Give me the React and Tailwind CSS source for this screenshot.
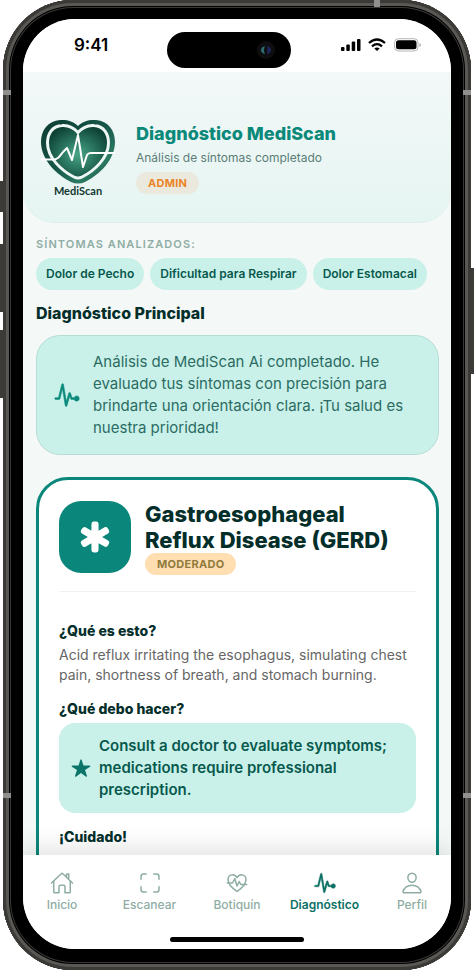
import React, { useState } from 'react';
import {
  IoFitnessOutline,
  IoHomeOutline,
  IoMedical,
  IoPersonOutline,
  IoPulse,
  IoScanOutline,
  IoStar,
} from 'react-icons/io5';

const symptoms = ['Dolor de Pecho', 'Dificultad para Respirar', 'Dolor Estomacal'];

const tabs = [
  { name: 'Inicio', icon: IoHomeOutline },
  { name: 'Escanear', icon: IoScanOutline },
  { name: 'Botiquín', icon: IoFitnessOutline },
  { name: 'Diagnóstico', icon: IoPulse },
  { name: 'Perfil', icon: IoPersonOutline },
];

const Logo = () => (
  <svg viewBox="0 0 76 80" className="h-20 w-[76px] shrink-0" role="img" aria-label="MediScan">
    <defs>
      <linearGradient id="rim" x1="0" y1="0" x2="1" y2="1">
        <stop offset="0" stopColor="#0d3b30" />
        <stop offset="0.5" stopColor="#17584a" />
        <stop offset="0.75" stopColor="#2c7a63" />
        <stop offset="1" stopColor="#0d3b30" />
      </linearGradient>
      <radialGradient id="core" cx="0.5" cy="0.55" r="0.55">
        <stop offset="0" stopColor="#4aa686" />
        <stop offset="0.5" stopColor="#2a7560" />
        <stop offset="1" stopColor="#0f4537" />
      </radialGradient>
    </defs>
    <path
      d="M38 8C33 3 27 1.500 20 2C8 3 1 12 1 24C1 42 17 57 31 64Q38 67 45 64C59 57 75 42 75 24C75 12 68 3 56 2C49 1.500 43 3 38 8Z"
      fill="url(#rim)"
    />
    <path
      d="M38 14.500C34 10 28 7 22 7.500C12 8 7.500 16 7.500 25C7.500 40 22 53 34 59Q38 61 42 59C54 53 68.500 40 68.500 25C68.500 16 64 8 54 7.500C48 7 42 10 38 14.500Z"
      fill="url(#core)"
      stroke="#eef7f4"
      strokeWidth="3"
    />
    <path d="M1 41.500H13C18 41.500 20 38 23 34L27 30L32 42L38 17L43 49L47 37Q48 35 51 35H75" fill="none" stroke="#fff" strokeWidth="2" strokeLinejoin="round" />
    <text x="38" y="77" textAnchor="middle" fontSize="11" fontWeight="700" fill="#12382f" fontFamily="Lato, sans-serif">
      MediScan
    </text>
  </svg>
);

const StatusBar = () => (
  <div className="flex h-[53px] shrink-0 items-start justify-between bg-white pr-[30px] pl-[51px]">
    <span className="mt-[14px] w-[43px] text-[17px] leading-6 font-semibold text-black">9:41</span>
    <div className="mt-[13px] flex h-9 w-[124px] items-center justify-end rounded-full bg-black pr-4">
      <svg viewBox="0 0 18 18" className="h-[18px] w-[18px]">
        <circle cx="9" cy="9" r="9" fill="#0e0e10" />
        <path d="M8 5Q4 6 4 9T8 13Q6 9 8 5Z" fill="#2a6c70" />
        <path d="M10 5Q14 6 14 9T10 13Q11 9 10 5Z" fill="#20265c" />
      </svg>
    </div>
    <svg viewBox="0 0 80 14" className="mt-[19px] h-[14px] w-20">
      <rect x="0" y="9" width="3.500" height="4" rx="1" />
      <rect x="5.300" y="6.500" width="3.500" height="6.500" rx="1" />
      <rect x="10.700" y="3.500" width="3.500" height="9.500" rx="1" />
      <rect x="16" y="1" width="3.500" height="12" rx="1" />
      <path d="M28 5Q36 -2 44 5M31 8.300Q36 4 41 8.300" fill="none" stroke="#000" strokeWidth="2.300" />
      <path d="M33.300 10.500Q36 8.300 38.700 10.500L36 13Z" />
      <rect x="53.500" y="0.700" width="23.500" height="12.300" rx="4" fill="none" stroke="#b5b5b5" />
      <rect x="55" y="2.300" width="20.500" height="9" rx="2.500" />
      <path d="M78.300 5V9Q80 8.500 80 7T78.300 5Z" fill="#b5b5b5" />
    </svg>
  </div>
);

const Header = () => (
  <header className="flex items-center gap-5 rounded-b-[32px] border-b border-[#d9edea] bg-linear-to-b from-[#f3f8f8] to-[#e5f5f2] pt-[46px] pr-4 pb-6 pl-[17px]">
    <Logo />
    <div className="flex flex-col items-start">
      <h1 className="text-[18px] leading-6 font-extrabold text-[#0a897a]">Diagnóstico MediScan</h1>
      <p className="mt-1 text-[12px] leading-4 text-[#5c7d77]">Análisis de síntomas completado</p>
      <span className="mt-[6px] rounded-full bg-[#ebe9de] px-3 text-[11px] leading-[22px] font-bold tracking-wide text-[#ec8426]">
        ADMIN
      </span>
    </div>
  </header>
);

const DiagnosisCard = () => (
  <article className="mt-[22px] rounded-[32px] border-3 border-[#0a877a] bg-white px-5 pt-[21px] pb-24">
    <div className="flex gap-[14px] border-b border-[#edf2f2] pb-4">
      <div className="flex size-[72px] shrink-0 items-center justify-center rounded-[22px] bg-[#0a877a] text-white">
        <IoMedical className="size-[38px]" />
      </div>
      <div className="flex flex-col items-start">
        <h3 className="text-[22px] leading-[26px] font-extrabold text-[#032e2a]">Gastroesophageal Reflux Disease (GERD)</h3>
        <span className="rounded-full bg-[#ffdfb2] px-3 text-[11px] leading-[22px] font-bold tracking-wide text-[#917b3c]">
          MODERADO
        </span>
      </div>
    </div>
    <h4 className="mt-[29px] text-[14px] leading-5 font-extrabold text-[#032e2a]">¿Qué es esto?</h4>
    <p className="mt-1 text-[14px] leading-5 text-[#666]">
      Acid reflux irritating the esophagus, simulating chest pain, shortness of breath, and stomach burning.
    </p>
    <h4 className="mt-[14px] text-[14px] leading-5 font-extrabold text-[#032e2a]">¿Qué debo hacer?</h4>
    <div className="mt-1 flex items-center gap-2 rounded-2xl bg-[#caf1e9] px-3 py-3 text-[#07594e]">
      <IoStar className="size-5 shrink-0 text-[#0a7568]" />
      <p className="text-[15px] leading-[22px] font-semibold">
        Consult a doctor to evaluate symptoms; medications require professional prescription.
      </p>
    </div>
    <h4 className="mt-[14px] text-[14px] leading-5 font-extrabold text-[#032e2a]">¡Cuidado!</h4>
  </article>
);

const TabBar = () => {
  const [active, setActive] = useState('Diagnóstico');

  return (
    <nav className="relative flex h-[94px] shrink-0 items-start justify-between bg-white px-1 pt-4 shadow-[0_-6px_24px_rgba(0,0,0,0.12)]">
      {tabs.map(({ name, icon: Icon }) => (
        <button
          key={name}
          type="button"
          onClick={() => setActive(name)}
          className={`flex w-[70px] flex-col items-center text-[12px] leading-4 whitespace-nowrap ${
            active === name
              ? 'font-semibold text-[#0a6f63] [&_path]:[stroke-width:10px]'
              : 'font-medium text-[#8fada5]'
          }`}
        >
          <Icon className="mb-[2px] size-6" />
          {name}
        </button>
      ))}
      <div className="absolute bottom-[7px] left-1/2 h-[5px] w-[134px] -translate-x-1/2 rounded-full bg-black" />
    </nav>
  );
};

const App = () => {
  return (
    <div className="relative h-screen bg-white px-[3px] pb-px font-['Inter',sans-serif]">
      {/* Side buttons */}
      <div className="absolute top-[181px] left-0 h-[31px] w-1 bg-[#3d3b38]" />
      <div className="absolute top-[244px] left-0 h-[68px] w-1 bg-[#3d3b38]" />
      <div className="absolute top-[330px] left-0 h-[68px] w-1 bg-[#3d3b38]" />
      <div className="absolute top-[268px] right-0 h-[106px] w-1 bg-[#3d3b38]" />

      <div className="relative h-full rounded-[70px] bg-black px-5 pt-[19px] pb-[21px] shadow-[inset_0_0_0_3px_#3b3a37,inset_0_0_0_6px_#5a5855,inset_0_0_0_7px_#000,inset_0_0_0_8px_#383836]">
        {/* Antenna bands */}
        <div className="absolute top-[90px] left-0 h-[5px] w-2 bg-[#908f8d]" />
        <div className="absolute top-[90px] right-0 h-[5px] w-2 bg-[#908f8d]" />
        <div className="absolute bottom-[172px] left-0 h-[5px] w-2 bg-[#908f8d]" />
        <div className="absolute right-0 bottom-[172px] h-[5px] w-2 bg-[#908f8d]" />
        <div className="absolute top-0 right-[91px] h-[7px] w-[6px] bg-[#908f8d]" />

        <div className="flex h-full flex-col overflow-hidden rounded-[52px] bg-[#f4f8f7]">
          <StatusBar />
          <main className="min-h-0 flex-1 overflow-y-auto [scrollbar-width:none]">
            <Header />
            <div className="pt-[13px] pr-3 pb-8 pl-[13px]">
              <p className="text-[11px] leading-4 font-semibold tracking-widest text-[#8fada5]">SÍNTOMAS ANALIZADOS:</p>
              <ul className="mt-[6px] flex gap-[6px]">
                {symptoms.map((symptom) => (
                  <li
                    key={symptom}
                    className="rounded-full bg-[#caf1e9] px-[10px] text-[12px] leading-8 font-semibold whitespace-nowrap text-[#07594e]"
                  >
                    {symptom}
                  </li>
                ))}
              </ul>
              <h2 className="mt-[11px] text-[16px] leading-6 font-extrabold text-[#032e2a]">Diagnóstico Principal</h2>
              <section className="mt-[10px] flex items-center gap-3 rounded-3xl border border-[#b5ddd5] bg-[#caf1e9] py-[15px] pr-5 pl-4">
                <IoPulse className="size-7 shrink-0 text-[#0a897a] [&_path]:[stroke-width:10px]" />
                <p className="text-[15px] leading-[22px] text-[#2a6c63]">
                  Análisis de MediScan Ai completado. He evaluado tus síntomas con precisión para brindarte una
                  orientación clara. ¡Tu salud es nuestra prioridad!
                </p>
              </section>
              <DiagnosisCard />
            </div>
          </main>
          <TabBar />
        </div>
      </div>
    </div>
  );
};

export default App;
